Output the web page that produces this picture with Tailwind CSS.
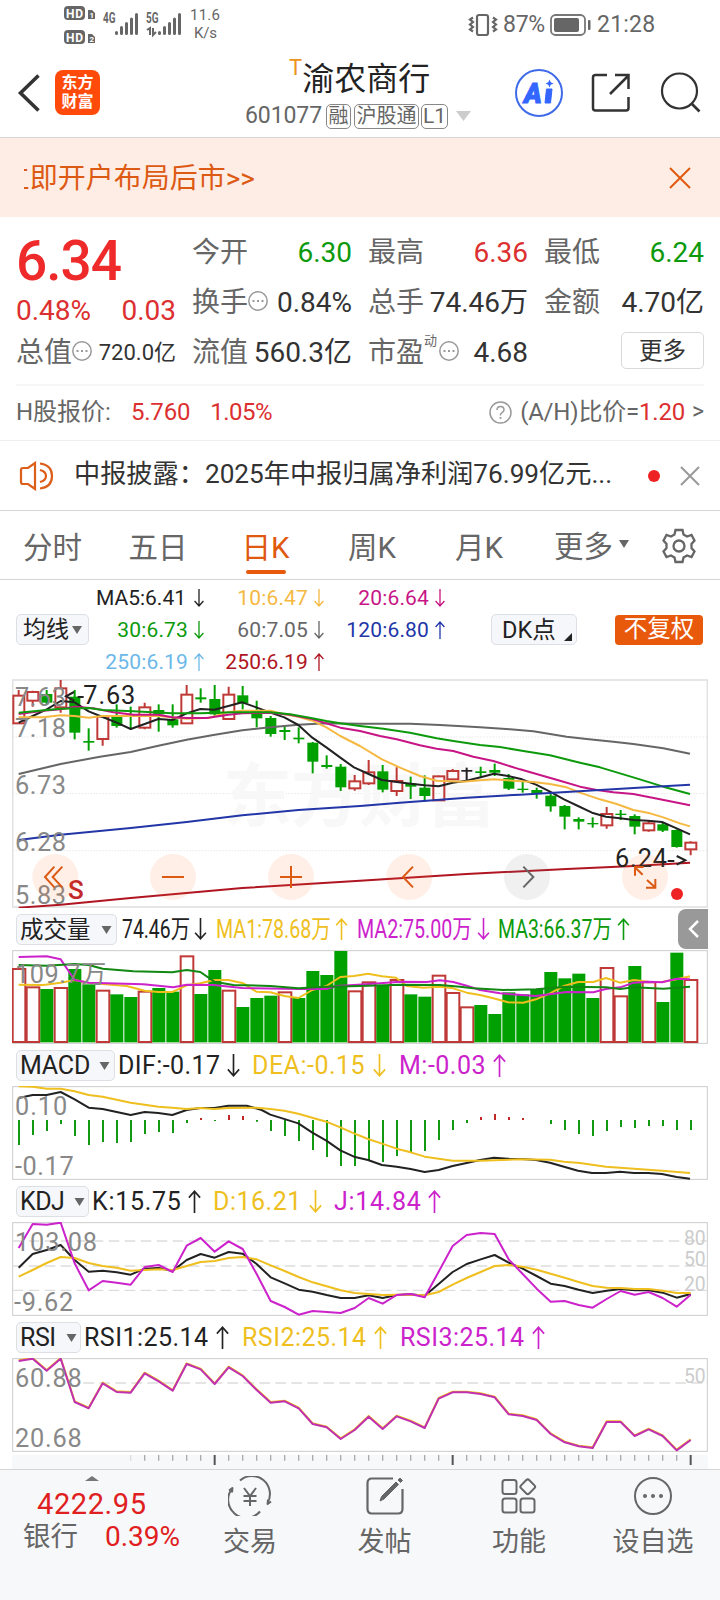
<!DOCTYPE html>
<html lang="zh-CN">
<head>
  <meta charset="UTF-8" />
  <meta name="viewport" content="width=device-width, initial-scale=1.0"/>
  <title>渝农商行 601077</title>
  <script src="https://cdn.jsdelivr.net/npm/@tailwindcss/browser@4"></script>
</head>
<body class="w-[720px] h-[1600px] overflow-hidden bg-white text-[#333] font-['Roboto','Noto_Sans_CJK_SC',sans-serif]">

  <!-- Shared icons -->
  <svg class="hidden">
    <symbol id="up" viewBox="0 0 10 18"><path d="M5 18V1M0.600 6L5 1l4.400 5" fill="none" stroke="currentColor" stroke-width="1.300"/></symbol>
    <symbol id="down" viewBox="0 0 10 18"><path d="M5 0v17M0.600 12L5 17l4.400-5" fill="none" stroke="currentColor" stroke-width="1.300"/></symbol>
    <symbol id="dots" viewBox="0 0 20 20"><circle cx="10" cy="10" r="9.200" fill="none" stroke="#999" stroke-width="1.500"/><path d="M4.500 10h2M9 10h2M13.500 10h2" stroke="#999" stroke-width="2"/></symbol>
    <symbol id="caret" viewBox="0 0 10 8"><path d="M0 0h10L5 8z" fill="#666"/></symbol>
  </svg>

  <!-- Status bar -->
  <div class="h-[50px] flex items-center text-[#666]">
    <svg class="ml-[60px]" width="165" height="50" viewBox="60 0 165 50" font-family="Roboto">
      <g fill="#666">
        <rect x="64" y="6" width="21" height="14" rx="4"/><rect x="64" y="30" width="21" height="14" rx="4"/>
        <path d="M88 10h4l3 3v6h-7zM88 34h4l3 3v6h-7z"/>
      </g>
      <g fill="#fff" font-size="12" font-weight="700">
        <text x="66" y="17.500" textLength="17">HD</text><text x="66" y="41.500" textLength="17">HD</text>
        <text x="89.500" y="18" font-size="8">1</text><text x="89.500" y="42" font-size="8">2</text>
      </g>
      <g fill="#666" font-size="14" font-weight="700">
        <text x="103" y="23" textLength="12.500" lengthAdjust="spacingAndGlyphs">4G</text>
        <text x="146" y="23" textLength="12.500" lengthAdjust="spacingAndGlyphs">5G</text>
      </g>
      <path d="M116.500 33.500v-1M121.500 33.500v-6M126.500 33.500V23.500M131.500 33.500V19M136.500 33.500V14.500M159.500 33.500v-1M164.500 33.500v-6M169.500 33.500V23.500M174.500 33.500V19M179.500 33.500V14.500" stroke="#666" stroke-width="3" stroke-linecap="round"/>
      <path d="M147 30l3-2v7M153 28v7l3-3" stroke="#666" stroke-width="2" fill="none"/>
      <g fill="#666" font-size="15">
        <text x="190" y="20" textLength="30">11.6</text><text x="194" y="38" textLength="23">K/s</text>
      </g>
    </svg>
    <svg class="ml-[243px]" width="30" height="24" viewBox="0 0 30 24" fill="none" stroke="#666" stroke-width="2.200">
      <rect x="9" y="2" width="11" height="20" rx="2"/>
      <path d="M5 4.500L2 6.500l3 2.500-3 2.500 3 2.500-3 2.500 3 2M25 4.500l3 2-3 2.500 3 2.500-3 2.500 3 2.500-3 2"/>
    </svg>
    <span class="ml-[5px] mt-px w-[47px] text-[23px] tracking-[-0.300px]">87%</span>
    <svg width="41" height="22" viewBox="0 0 41 22">
      <rect x="1" y="1" width="34" height="20" rx="4.500" fill="none" stroke="#777" stroke-width="1.800"/>
      <rect x="4" y="4" width="25" height="14" rx="2" fill="#666"/><rect x="38" y="6" width="2.500" height="10" rx="1" fill="#666"/>
    </svg>
    <span class="ml-[6px] mt-px text-[23px] tracking-[0.200px]">21:28</span>
  </div>

  <!-- Header -->
  <div class="h-[88px] flex items-start border-b border-[#d5d5d5]">
    <svg class="ml-[17px] mt-[23px]" width="24" height="40" viewBox="0 0 24 40"><path d="M21.500 2.500L3.500 20l18 17.500" fill="none" stroke="#333" stroke-width="3.600"/></svg>
    <div class="ml-[14px] mt-[20px] w-[45px] h-[45px] rounded-lg bg-[#ff4a0a] text-white font-bold text-[16px] leading-[19px] text-center pt-[3px]">东方<br>财富</div>
    <div class="ml-[145px] mt-[9px] w-[229px]">
      <div class="flex items-start ml-[44px] h-[42px] text-[#222]">
        <span class="text-[22px] leading-[17px] text-[#ee9420]">T</span>
        <span class="text-[32px] leading-[40px] whitespace-nowrap">渝农商行</span>
      </div>
      <div class="flex items-center h-[30px] text-[23px] leading-[24px] text-[#666]">
        <span class="w-[81px] tracking-[-0.100px]">601077</span>
        <span class="w-[25px] h-[25px] border border-[#888] rounded-[5px] text-[20px] leading-[22px] text-center">融</span>
        <span class="ml-[3px] w-[65px] h-[25px] border border-[#888] rounded-[5px] text-[20px] leading-[22px] text-center">沪股通</span>
        <span class="ml-[2px] w-[27px] h-[25px] border border-[#888] rounded-[5px] text-[21px] leading-[23px] text-center">L1</span>
        <svg class="ml-[8px]" width="15" height="10"><path d="M0 0h15L7.500 10z" fill="#ccc"/></svg>
      </div>
    </div>
    <svg class="ml-[41px] mt-[19px]" width="48" height="48" viewBox="0 0 48 48">
      <circle cx="24" cy="24" r="23" fill="none" stroke="#3f6bea" stroke-width="2"/>
      <text x="9" y="33.500" font-size="27" font-weight="900" font-style="italic" font-family="Roboto" fill="#3366ff" stroke="#3366ff" stroke-width="1">A</text>
      <path d="M31.500 20h5.500l-1.500 14H30z" fill="#3366ff" stroke="#3366ff"/>
      <path d="M34.500 10.500l1.200 2.800 2.800 1.200-2.800 1.200-1.200 2.800-1.200-2.800-2.800-1.200 2.800-1.200z" fill="#3366ff"/>
    </svg>
    <svg class="ml-[28px] mt-[23px]" width="40" height="40" viewBox="0 0 40 40" fill="none" stroke="#333" stroke-width="2.500">
      <path d="M16 2H4.500Q2 2 2 4.500V35q0 2.500 2.500 2.500H35q2.500 0 2.500-2.500V24M19 21L37 3M24 2h13.500v14"/>
    </svg>
    <svg class="ml-[29px] mt-[22px]" width="42" height="42" viewBox="0 0 42 42" fill="none" stroke="#333" stroke-width="2.200">
      <circle cx="19.500" cy="19" r="17.500"/><path d="M31.500 31.500l8 8" stroke-width="2.600"/>
    </svg>
  </div>

  <!-- Promo banner -->
  <div class="h-[79px] bg-[#fdede4] flex items-center justify-between">
    <div class="ml-[24px] mt-[3px] w-[231px] overflow-hidden flex justify-end whitespace-nowrap text-[28px] text-[#dd5a14]">立即开户布局后市&gt;&gt;</div>
    <svg class="mr-[29px]" width="22" height="22" viewBox="0 0 22 22"><path d="M1 1l20 20M21 1L1 21" stroke="#e0590f" stroke-width="2"/></svg>
  </div>

  <!-- Quote -->
  <div class="mx-4 h-[169px] pt-[11px] grid grid-cols-4 gap-4 text-[28px] leading-[50px] border-b-2 border-[#f6f6f6] whitespace-nowrap">
    <div>
      <div class="h-[66px] text-[55px] leading-[66px] font-medium text-[#ee2a2a] tracking-[-1px]">6.34</div>
      <div class="h-[34px] leading-[34px] flex justify-between text-[#dc3030] text-[28px]"><span>0.48%</span><span>0.03</span></div>
      <div class="flex items-center justify-between h-[50px]">
        <span class="flex items-center text-[#666]">总值<svg class="-mt-1" width="20" height="20"><use href="#dots"/></svg></span>
        <span class="text-[22px]">720.0亿</span>
      </div>
    </div>
    <div>
      <div class="flex justify-between"><span class="text-[#666]">今开</span><span class="text-[#0c9a0c]">6.30</span></div>
      <div class="flex items-center justify-between"><span class="flex items-center text-[#666]">换手<svg class="-mt-1" width="20" height="20"><use href="#dots"/></svg></span><span>0.84%</span></div>
      <div class="flex justify-between"><span class="text-[#666]">流值</span><span class="text-[28px]">560.3亿</span></div>
    </div>
    <div>
      <div class="flex justify-between"><span class="text-[#666]">最高</span><span class="text-[#dc3030]">6.36</span></div>
      <div class="flex justify-between"><span class="text-[#666]">总手</span><span class="text-[28px]">74.46万</span></div>
      <div class="flex items-center justify-between"><span class="flex items-center text-[#666]">市盈<sup class="text-[13px] leading-none mb-[13px]">动</sup><svg class="-mt-1 ml-[2px]" width="20" height="20"><use href="#dots"/></svg></span><span>4.68</span></div>
    </div>
    <div>
      <div class="flex justify-between"><span class="text-[#666]">最低</span><span class="text-[#0c9a0c]">6.24</span></div>
      <div class="flex justify-between"><span class="text-[#666]">金额</span><span>4.70亿</span></div>
      <div class="flex justify-end"><button class="mt-[4px] w-[83px] h-[37px] border border-[#d9d9d9] rounded-[5px] text-[23.500px] leading-[34px]">更多</button></div>
    </div>
  </div>

  <!-- H share -->
  <div class="h-[55px] border-b border-[#eee] px-4 pb-[2px] flex items-center text-[24px] text-[#666]">
    <span>H股报价:</span>
    <span class="ml-[20px] text-[#dc3030] tracking-[-0.200px]">5.760</span>
    <span class="ml-[20px] text-[#dc3030] tracking-[-0.500px]">1.05%</span>
    <svg class="ml-auto mr-[8px]" width="23" height="23" viewBox="0 0 23 23"><circle cx="11.500" cy="11.500" r="10.500" fill="none" stroke="#999" stroke-width="1.500"/><path d="M8 9q0-3.500 3.500-3.500T15 9q0 1.500-2 2.700t-1.500 2.800" fill="none" stroke="#999" stroke-width="1.500"/><circle cx="11.500" cy="17" r="1.100" fill="#999"/></svg>
    <span class="tracking-[-0.200px]">(A/H)比价=<span class="text-[#dc3030]">1.20</span></span><span class="ml-[7px] text-[23px]">&gt;</span>
  </div>

  <!-- News -->
  <div class="h-[70px] border-b border-[#d5d5d5] flex items-center">
    <svg class="ml-[19px]" width="35" height="30" viewBox="0 0 35 30" fill="none" stroke="#dc5e18" stroke-width="2.200">
      <path d="M2 9q0-2 2-2h5l7-5v26l-7-5H4q-2 0-2-2zM21 2.500Q33 4 33 15T21 27.500M21 9q6 1.500 6 6t-6 6"/>
    </svg>
    <span class="ml-[20px] mb-[2px] w-[574px] text-[26.200px] whitespace-nowrap">中报披露：2025年中报归属净利润76.99亿元...</span>
    <span class="w-3 h-3 rounded-full bg-[#ee2222]"></span>
    <svg class="ml-[20px]" width="20" height="20" viewBox="0 0 20 20"><path d="M1 1l18 18M19 1L1 19" stroke="#999" stroke-width="2"/></svg>
  </div>

  <!-- Tabs -->
  <div class="h-[69px] border-b border-[#d5d5d5] flex text-[29.500px] leading-[74px] text-[#666] text-center">
    <div class="w-[105px]">分时</div>
    <div class="w-[106px]">五日</div>
    <div class="w-[109px] text-[#e0590f] flex flex-col items-center"><span class="h-[59px]">日K</span><span class="w-10 h-1 rounded-full bg-[#e8590c]"></span></div>
    <div class="w-[104px]">周K</div>
    <div class="w-[110px]">月K</div>
    <div class="w-[96px] flex items-center pl-[20px] whitespace-nowrap"><span class="mt-[4px]">更多</span><svg class="ml-[6px] mb-[2px] shrink-0" width="10" height="8"><use href="#caret"/></svg></div>
    <svg class="ml-[32px] mt-[17px]" width="34" height="36" viewBox="0 0 34 36" fill="none" stroke="#666" stroke-width="2.300" stroke-linejoin="miter">
      <path d="M13.500 2h7l1 4.500 3.500 2 4.500-1.500 3 5.500-3 3.500v4l3 3.500-3 5.500-4.500-1.500-3.500 2-1 4.500h-7l-1-4.500-3.500-2L4.500 29l-3-5.500 3-3.500v-4l-3-3.500 3-5.500L9 8.500l3.500-2z"/><circle cx="17" cy="18" r="5.500"/>
    </svg>
  </div>

  <!-- Moving average legend -->
  <div class="h-[99px] flex items-center pl-4">
    <button class="w-[73px] h-[31px] rounded-[5px] border border-[#dcdfe4] bg-[#f6f7fa] text-[23px] leading-[28px] flex items-center justify-center text-[#222] whitespace-nowrap">均线<svg class="ml-[3px] shrink-0" width="10" height="8"><use href="#caret"/></svg></button>
    <div class="grid grid-cols-[115px_120px_121px] auto-rows-[32px] text-[21px] leading-[32px] text-right whitespace-nowrap">
      <div class="flex items-center justify-end gap-[8px] text-[#222]">MA5:6.41<svg width="10" height="18"><use href="#down"/></svg></div>
      <div class="flex items-center justify-end gap-[6px] tracking-[0.150px] text-[#f5b942]">10:6.47<svg width="10" height="18"><use href="#down"/></svg></div>
      <div class="flex items-center justify-end gap-[6px] tracking-[0.150px] text-[#c71585]">20:6.64<svg width="10" height="18"><use href="#down"/></svg></div>
      <div class="flex items-center justify-end gap-[6px] tracking-[0.150px] text-[#0c9a0c]">30:6.73<svg width="10" height="18"><use href="#down"/></svg></div>
      <div class="flex items-center justify-end gap-[6px] tracking-[0.150px] text-[#666]">60:7.05<svg width="10" height="18"><use href="#down"/></svg></div>
      <div class="flex items-center justify-end gap-[6px] tracking-[0.150px] text-[#2236a8]">120:6.80<svg width="10" height="18"><use href="#up"/></svg></div>
      <div class="flex items-center justify-end gap-[6px] tracking-[0.150px] text-[#6cb8e8]">250:6.19<svg width="10" height="18"><use href="#up"/></svg></div>
      <div class="flex items-center justify-end gap-[6px] tracking-[0.150px] text-[#b01522]">250:6.19<svg width="10" height="18"><use href="#up"/></svg></div>
    </div>
    <button class="ml-[46px] w-[86px] h-[31px] rounded-[5px] border border-[#dcdfe4] bg-[#f6f7fa] text-[23.500px] leading-[28px] pl-[10px] flex items-center text-[#222] whitespace-nowrap">DK点<svg class="ml-[8px] mt-[15px] shrink-0" width="8" height="8"><path d="M8 0v8H0z" fill="#222"/></svg></button>
    <span class="ml-[38px] w-[88px] h-[30px] rounded-[4px] bg-[#e8590c] text-white text-[23.500px] leading-[29px] text-center">不复权</span>
  </div>

  <!-- Candles -->
  <svg id="kline" class="block ml-3" width="696" height="229" viewBox="36 27 2088 687" font-family="Roboto, 'Noto Sans CJK SC', sans-serif" fill="none">
    <g stroke="#ddd" stroke-width="3" stroke-dasharray="3 6"><path d="M38 201H2120M38 371H2120M38 542H2120"/></g>
    <text x="668" y="452" font-size="208" font-weight="700" fill="#f8f8f8" textLength="820">东方财富</text>
    <rect x="38" y="30" width="2084" height="681" stroke="#e2e2e2" stroke-width="5"/>
    <g id="candles"></g>
    <g stroke-width="6" stroke-linejoin="round">
      <polyline stroke="#666" points="56,312 182,282 300,260 392,246 475,227 560,209 640,195 727,181 811,172 895,164 979,160 1080,161 1230,161 1320,165 1440,172 1530,178 1600,184 1700,200 1760,207 1840,215 1900,222 1990,235 2070,251"/>
      <polyline stroke="#222" points="56,158 98,138 140,118 182,93 224,97 266,124 308,141 350,158 392,177 434,162 475,147 517,150 560,130 601,117 643,119 685,108 727,97 769,112 811,128 853,142 895,165 937,203 979,232 1021,263 1062,292 1106,312 1146,330 1190,336 1232,341 1274,346 1316,349 1358,338 1400,332 1442,322 1482,311 1524,318 1566,328 1608,344 1650,365 1692,388 1734,408 1776,428 1818,440 1860,445 1902,450 1944,452 1986,456 2030,475 2070,493"/>
      <polyline stroke="#f5b942" points="56,142 130,142 182,136 224,138 266,143 308,138 392,138 475,138 560,146 630,143 685,126 727,122 811,122 850,132 895,140 937,152 979,172 1021,198 1080,228 1146,268 1200,293 1260,318 1310,332 1390,335 1440,331 1482,328 1540,332 1600,336 1650,342 1700,352 1740,368 1800,388 1850,402 1900,420 1950,430 1990,442 2040,460 2070,469"/>
      <polyline stroke="#c71585" points="56,132 130,122 182,118 224,110 280,115 340,127 400,134 475,134 517,142 560,144 620,144 685,134 727,130 811,128 870,134 937,147 979,160 1021,173 1080,183 1140,198 1190,208 1260,226 1310,236 1360,243 1420,260 1480,273 1560,298 1620,315 1680,332 1740,350 1790,360 1840,367 1900,372 1980,388 2070,406"/>
      <polyline stroke="#0c9a0c" points="56,128 140,120 182,116 266,114 308,120 400,124 517,130 600,130 700,127 811,127 870,133 937,145 979,153 1021,160 1080,168 1150,176 1230,188 1310,205 1360,213 1440,225 1500,231 1570,243 1650,256 1740,278 1800,292 1900,322 1990,350 2070,372"/>
      <polyline stroke="#2236a8" points="56,510 182,494 392,474 560,456 727,436 895,420 1080,408 1200,398 1400,383 1560,374 1800,360 1990,349 2070,344"/>
      <polyline stroke="#b01522" points="56,713 182,704 392,684 727,654 1080,632 1400,612 1700,597 1900,588 2070,578"/>
    </g>
    <g fill="#888" font-size="76">
      <text x="45" y="107" textLength="153">7.63</text><text x="45" y="201" textLength="153">7.18</text>
      <text x="45" y="372" textLength="153">6.73</text><text x="45" y="542" textLength="153">6.28</text>
      <text x="45" y="701" textLength="153">5.83</text>
    </g>
    <text x="204" y="688" font-size="78" font-weight="500" fill="#c22828">S</text>
    <path d="M222 66l-24 13 24 13M233 81h18" stroke="#222" stroke-width="6"/>
    <text x="250" y="101" font-size="76" fill="#222" textLength="156">7.63</text>
    <text x="1845" y="592" font-size="76" fill="#222" textLength="156">6.24</text>
    <path d="M2003 573h20M2030 558l26 13-26 13" stroke="#222" stroke-width="6"/>
    <g fill="#fc6a20" fill-opacity="0.110">
      <circle cx="166" cy="621" r="69"/><circle cx="519" cy="621" r="69"/><circle cx="873" cy="621" r="69"/>
      <circle cx="1228" cy="621" r="69"/><circle cx="1581" cy="621" r="69" fill="#777"/><circle cx="1935" cy="621" r="69"/>
    </g>
    <g stroke="#dc5a14" stroke-width="6">
      <path d="M163 590l-28 31 28 31M187 590l-29 31 29 31M486 621h66M840 621h66M873 588v66M1239 590l-30 31 30 31"/>
      <path d="M1570 590l30 31-30 31" stroke="#666"/>
      <path d="M1928 614l-22-21M1905 617v-26h26M1941 630l24 22M1966 627v26h-28"/>
    </g>
    <circle cx="2031" cy="672" r="18" fill="#ee2222"/>
  </svg>

  <!-- Volume -->
  <div class="h-[42px] pl-4 flex items-center">
    <button class="w-[101px] h-[31px] mt-px rounded-[5px] border border-[#dcdfe4] bg-[#f6f7fa] text-[23.500px] leading-[28px] pl-[3px] flex items-center text-[#222] whitespace-nowrap">成交量<svg class="ml-[10px] shrink-0" width="11" height="8"><use href="#caret"/></svg></button>
    <svg width="561" height="36" viewBox="117 0 561 36" font-size="25" font-family="Roboto, 'Noto Sans CJK SC', sans-serif" fill="currentColor">
      <g class="text-[#222]"><text x="122" y="27" textLength="68" lengthAdjust="spacingAndGlyphs">74.46万</text><use href="#down" x="194" y="7" width="13" height="22"/></g>
      <g class="text-[#eebf1e]"><text x="216" y="27" textLength="115" lengthAdjust="spacingAndGlyphs">MA1:78.68万</text><use href="#up" x="335" y="7" width="13" height="22"/></g>
      <g class="text-[#cc22cc]"><text x="357" y="27" textLength="115" lengthAdjust="spacingAndGlyphs">MA2:75.00万</text><use href="#down" x="477" y="7" width="13" height="22"/></g>
      <g class="text-[#0c9a0c]"><text x="498" y="27" textLength="114" lengthAdjust="spacingAndGlyphs">MA3:66.37万</text><use href="#up" x="617" y="7" width="13" height="22"/></g>
    </svg>
    <div class="w-[30px] h-[40px] rounded-l-[8px] bg-[#999] flex items-center justify-center"><svg width="11" height="18"><path d="M10 1L2 9l8 8" fill="none" stroke="#fff" stroke-width="2.500"/></svg></div>
  </div>
  <svg class="block ml-3" width="696" height="94" viewBox="36 30 2088 282" font-family="Roboto, 'Noto Sans CJK SC', sans-serif" fill="none">
    <rect x="38" y="32" width="2084" height="278" stroke="#ccc" stroke-width="3"/>
    <g id="volume"></g>
    <g stroke-width="6" stroke-linejoin="round">
      <polyline stroke="#eebf1e" points="56,134 130,135 182,128 224,120 266,128 308,132 380,138 434,152 475,156 517,156 560,136 601,130 643,120 685,120 730,130 769,155 811,157 853,168 895,174 937,150 979,138 1021,111 1062,108 1104,101 1146,109 1188,113 1220,138 1270,143 1320,140 1360,145 1400,158 1440,165 1480,175 1524,187 1570,188 1608,178 1650,160 1692,138 1734,126 1780,126 1818,114 1860,128 1902,120 1944,125 1986,126 2030,118 2070,109"/>
      <polyline stroke="#cc22cc" points="56,51 140,49 182,58 224,120 266,128 430,133 520,142 560,134 640,135 727,144 900,147 979,147 1010,138 1062,135 1140,130 1200,125 1280,126 1320,121 1360,126 1400,137 1440,150 1500,160 1608,168 1700,156 1780,157 1818,147 1860,142 1902,128 1944,125 1986,127 2030,116 2070,118"/>
      <polyline stroke="#118811" points="56,75 140,77 224,72 266,75 308,86 400,94 517,97 560,90 601,96 643,125 700,135 811,138 895,145 979,140 1080,138 1200,134 1320,135 1380,140 1420,145 1510,150 1608,148 1700,140 1818,142 1860,147 1902,142 1990,146 2070,140"/>
    </g>
    <text x="45" y="128" font-size="76" fill="#888" textLength="274">109.7万</text>
  </svg>

  <!-- MACD -->
  <div class="h-[42px] pl-4 pt-px flex items-center text-[25px] leading-[42px] text-[#222] whitespace-nowrap">
    <button class="w-[99px] h-[31px] rounded-[5px] border border-[#dcdfe4] bg-[#f6f7fa] text-[25px] leading-[29px] pl-[3px] tracking-[-0.200px] flex items-center">MACD<svg class="ml-[9px] shrink-0" width="11" height="8"><use href="#caret"/></svg></button>
    <span class="ml-[3px] w-[109px] tracking-[0.400px]">DIF:-0.17</span><svg width="13" height="23"><use href="#down"/></svg>
    <span class="ml-[12px] w-[121px] tracking-[0.500px] text-[#eebf1e]">DEA:-0.15</span><svg class="text-[#eebf1e]" width="13" height="23"><use href="#down"/></svg>
    <span class="ml-[13px] w-[94px] tracking-[0.500px] text-[#cc22cc]">M:-0.03</span><svg class="text-[#cc22cc]" width="13" height="23"><use href="#up"/></svg>
  </div>
  <svg class="block ml-3" width="696" height="94" viewBox="36 438 2088 282" font-family="Roboto" fill="none">
    <rect x="38" y="440" width="2084" height="278" stroke="#ccc" stroke-width="3"/>
    <g id="macd"></g>
    <g stroke-width="6" stroke-linejoin="round">
      <polyline stroke="#222" points="56,474 98,465 140,465 182,456 224,478 266,503 308,507 350,516 392,525 434,516 475,519 517,525 560,510 601,504 643,504 685,497 740,497 785,510 811,524 895,550 937,578 979,602 1021,631 1062,650 1104,660 1146,675 1190,680 1232,687 1274,696 1316,690 1358,678 1400,669 1440,660 1482,653 1524,656 1566,657 1608,660 1650,668 1692,680 1734,692 1776,699 1818,699 1860,695 1902,699 1944,699 1986,702 2030,711 2070,716"/>
      <polyline stroke="#eebf1e" points="56,439 98,440 140,446 182,446 224,454 266,465 308,470 350,479 392,488 434,494 475,500 517,503 560,507 601,504 643,507 685,504 769,503 811,507 853,512 895,521 937,533 979,545 1021,562 1062,580 1104,597 1146,611 1190,626 1232,637 1274,650 1316,656 1358,662 1440,662 1560,658 1650,659 1692,665 1740,669 1818,680 1902,686 1986,692 2070,699"/>
    </g>
    <g fill="#888" font-size="76"><text x="45" y="524" textLength="157">0.10</text><text x="45" y="704" textLength="176">-0.17</text></g>
  </svg>

  <!-- KDJ -->
  <div class="h-[42px] pl-4 pt-px flex items-center text-[25px] leading-[42px] text-[#222] whitespace-nowrap">
    <button class="w-[73px] h-[31px] rounded-[5px] border border-[#dcdfe4] bg-[#f6f7fa] text-[25px] leading-[29px] pl-[3px] tracking-[-0.500px] flex items-center">KDJ<svg class="ml-[10px] shrink-0" width="11" height="8"><use href="#caret"/></svg></button>
    <span class="ml-[3px] w-[96px] tracking-[0.700px]">K:15.75</span><svg width="13" height="23"><use href="#up"/></svg>
    <span class="ml-[12px] w-[96px] tracking-[0.500px] text-[#eebf1e]">D:16.21</span><svg class="text-[#eebf1e]" width="13" height="23"><use href="#down"/></svg>
    <span class="ml-[12px] w-[94px] tracking-[0.700px] text-[#cc22cc]">J:14.84</span><svg class="text-[#cc22cc]" width="13" height="23"><use href="#up"/></svg>
  </div>
  <svg class="block ml-3" width="696" height="94" viewBox="36 66 2088 282" font-family="Roboto" fill="none">
    <rect x="38" y="68" width="2084" height="278" stroke="#ccc" stroke-width="3"/>
    <path d="M38 123H2120M38 198H2120M38 271H2120" stroke="#ddd" stroke-width="4" stroke-dasharray="32 16"/>
    <g fill="#ccc" font-size="58"><text x="2052" y="135">80</text><text x="2052" y="198">50</text><text x="2052" y="272">20</text></g>
    <g id="kdj" stroke-width="6" stroke-linejoin="round"></g>
    <g fill="#888" font-size="76"><text x="45" y="153" textLength="246">103.08</text><text x="42" y="332" textLength="178">-9.62</text></g>
  </svg>

  <!-- RSI -->
  <div class="h-[42px] pl-4 pt-px flex items-center text-[25px] leading-[42px] text-[#222] whitespace-nowrap">
    <button class="w-[65px] h-[31px] rounded-[5px] border border-[#dcdfe4] bg-[#f6f7fa] text-[25px] leading-[29px] pl-[3px] tracking-[-0.500px] flex items-center">RSI<svg class="ml-[10px] shrink-0" width="11" height="8"><use href="#caret"/></svg></button>
    <span class="ml-[3px] w-[132px] tracking-[0.450px]">RSI1:25.14</span><svg width="13" height="23"><use href="#up"/></svg>
    <span class="ml-[13px] w-[132px] tracking-[0.450px] text-[#eebf1e]">RSI2:25.14</span><svg class="text-[#eebf1e]" width="13" height="23"><use href="#up"/></svg>
    <span class="ml-[13px] w-[132px] tracking-[0.450px] text-[#cc22cc]">RSI3:25.14</span><svg class="text-[#cc22cc]" width="13" height="23"><use href="#up"/></svg>
  </div>
  <svg class="block ml-3" width="696" height="94" viewBox="36 474 2088 282" font-family="Roboto" fill="none">
    <rect x="38" y="476" width="2084" height="278" stroke="#ccc" stroke-width="3"/>
    <path d="M250 549H2120" stroke="#ddd" stroke-width="4" stroke-dasharray="32 16"/>
    <text x="2052" y="549" fill="#ccc" font-size="58">50</text>
    <g id="rsi" stroke-width="6" stroke-linejoin="round"></g>
    <g fill="#888" font-size="76"><text x="45" y="560" textLength="200">60.88</text><text x="45" y="740" textLength="200">20.68</text></g>
  </svg>

  <!-- Date ruler -->
  <svg class="block ml-3 mt-[3px] bg-[#f7f8fa]" width="696" height="14" viewBox="36 0 2088 42"><g id="ruler"></g></svg>

  <!-- Bottom bar -->
  <div class="h-[131px] border-t border-[#d5d5d5] bg-[#f7f8fa] flex text-[27px] leading-[40px] text-[#666]">
    <div class="w-[183px] pl-[23px] whitespace-nowrap">
      <svg class="ml-[62px] mt-[6px]" width="14" height="5"><path d="M0 5L7 0l7 5z" fill="#777"/></svg>
      <div class="ml-[14px] mt-[2px] h-[35px] leading-[42px] text-[29px] tracking-[0.600px] text-[#e02020]">4222.95</div>
      <div class="h-[40px] leading-[38px] flex text-[27.500px]"><span class="w-[82px]">银行</span><span class="text-[#e02020] text-[28px]">0.39%</span></div>
    </div>
    <div class="w-[134px] flex flex-col items-center">
      <svg class="mt-[6px]" width="44" height="40" viewBox="0 0 44 40" fill="none" stroke="#666" stroke-width="2">
        <path d="M12 4.500A18 18 0 0 1 39.500 27M39.500 28.500l.5-5M39 28.500l4-3M32 35.500A18 18 0 0 1 4.500 12M4.500 11.500l-.500 5M5 11.500l-4 3"/>
        <path d="M16 12l6 8 6-8M15.500 20h13M15.500 25h13M22 20v10"/>
      </svg>
      <span class="mt-[6px]">交易</span>
    </div>
    <div class="w-[135px] flex flex-col items-center">
      <svg class="mt-[6px]" width="40" height="40" viewBox="0 0 40 40" fill="none" stroke="#666" stroke-width="2.200">
        <path d="M28 2.500H7Q2.500 2.500 2.500 7v26q0 4.500 4.500 4.500h26q4.500 0 4.500-4.500V13"/>
        <path d="M15 25l1.500-4.500L31 6l2.500 2.500L19 23zM33 4l2-2 2.500 2.500-2 2z" fill="#666" stroke-width="1"/>
      </svg>
      <span class="mt-[6px]">发帖</span>
    </div>
    <div class="w-[134px] flex flex-col items-center">
      <svg class="mt-[6px]" width="40" height="40" viewBox="0 0 40 40" fill="none" stroke="#666" stroke-width="2">
        <rect x="3.500" y="4" width="14" height="14" rx="2.500"/><rect x="3.500" y="22.500" width="14" height="14" rx="2.500"/><rect x="21.500" y="22.500" width="14" height="14" rx="2.500"/>
        <rect x="23" y="5" width="11.500" height="11.500" rx="2" transform="rotate(45 28.750 10.750)"/>
      </svg>
      <span class="mt-[6px]">功能</span>
    </div>
    <div class="w-[134px] flex flex-col items-center">
      <svg class="mt-[6px]" width="40" height="40" viewBox="0 0 40 40" fill="none" stroke="#666" stroke-width="2">
        <circle cx="20" cy="20" r="18"/><g fill="#666" stroke="none"><circle cx="12" cy="20" r="2"/><circle cx="20" cy="20" r="2"/><circle cx="28" cy="20" r="2"/></g>
      </svg>
      <span class="mt-[6px]">设自选</span>
    </div>
  </div>

  <script>
    const RED = "#bf3a36", GREEN = "#00a000";
    const px = i => 56 + 42 * i;
    const fill = (id, html) => document.getElementById(id).innerHTML = html;

    // [up/down/flat, high, body top, body bottom, low]
    const candles = [
      ["r",60,77,160,160],["r",62,66,92,110],["g",60,72,98,105],["r",30,55,112,128],["g",60,80,188,208],
      ["g",175,213,218,242],["r",138,140,207,227],["g",103,136,168,173],["g",110,136,141,180],["r",98,112,173,178],
      ["g",103,120,133,185],["g",103,148,166,173],["r",45,74,160,162],["g",55,82,88,98],["g",45,87,133,138],
      ["r",50,74,147,150],["g",48,76,100,118],["g",92,120,145,172],["g",138,144,192,200],["g",170,180,186,210],
      ["g",172,203,208,220],["g",216,218,275,310],["g",256,285,291,296],["g",282,290,352,363],["r",315,334,355,362],
      ["r",270,307,340,345],["g",285,304,359,367],["r",292,333,363,378],["g",320,340,350,387],["g",316,353,378,395],
      ["r",317,319,391,391],["r",297,303,328,330],["k",293,300,305,330],["g",290,304,309,322],["g",281,300,308,318],
      ["g",312,324,356,360],["g",336,356,360,368],["g",353,360,372,386],["g",372,377,409,425],["g",405,408,440,478],
      ["g",442,447,455,478],["g",442,459,463,473],["r",411,432,466,476],["g",420,431,435,450],["g",433,438,470,493],
      ["r",452,460,481,485],["g",457,463,482,486],["g",478,480,531,533],["r",514,518,538,556]
    ];
    fill("candles", candles.map(([t, hi, top, bot, lo], i) => {
      const x = px(i);
      if (t === "r") return `<path d="M${x} ${hi}V${top}M${x} ${bot}V${lo}" stroke="${RED}" stroke-width="6"/>
        <rect x="${x - 16}" y="${top}" width="33" height="${bot - top}" stroke="${RED}" stroke-width="6"/>`;
      const c = t === "k" ? "#222" : GREEN;
      return `<path d="M${x} ${hi}V${lo}" stroke="${c}" stroke-width="6"/><rect x="${x - 16}" y="${top}" width="33" height="${bot - top}" fill="${c}"/>`;
    }).join(""));

    const vol = [85,140,147,142,87,133,150,163,171,153,144,155,47,162,90,150,201,174,167,155,174,93,105,33,152,
      125,135,118,163,170,105,157,200,195,222,157,163,147,96,115,101,174,82,167,78,125,186,38,118];
    const volUp = [0,1,3,6,9,12,15,19,24,25,27,30,31,32,42,43,45,48];
    fill("volume", vol.map((y, i) => {
      if (!volUp.includes(i)) return `<rect x="${px(i) - 19}" y="${y}" width="39" height="${307 - y}" fill="${GREEN}"/>`;
      const left = Math.max(px(i) - 18, 36);
      return `<rect x="${left}" y="${y + 2}" width="${px(i) + 20 - left}" height="${304 - y}" stroke="${RED}" stroke-width="6"/>`;
    }).join(""));

    const macd = [615,585,573,552,588,615,606,609,606,582,576,579,549,534,543,525,528,545,573,588,603,630,651,678,678,
      660,666,648,636,633,600,570,549,531,522,531,534,540,552,570,582,588,573,561,564,558,558,570,570];
    fill("macd", macd.map((y, i) => `<path d="M${px(i) + 1} 540V${y}" stroke="${y < 540 ? "#c22828" : "#119911"}" stroke-width="6"/>`).join(""));

    const line = (ys, color, dy = 0) => `<polyline stroke="${color}" points="${ys.map((y, i) => px(i) + "," + (y + dy)).join(" ")}"/>`;
    fill("kdj",
      line([203,162,150,135,180,215,212,217,224,206,204,213,180,162,173,156,161,192,232,250,269,275,285,294,294,286,294,285,283,287,252,216,192,178,165,188,206,228,251,258,269,279,272,267,271,271,278,293,282], "#222") +
      line([230,210,189,171,174,189,198,203,212,210,208,210,198,186,183,174,171,178,196,213,231,247,259,271,279,282,285,284,284,286,276,254,234,216,198,195,200,209,221,233,246,258,263,264,267,267,272,279,279], "#eebf1e") +
      line([144,72,74,68,190,271,243,248,254,201,195,216,137,114,155,124,147,222,303,321,344,333,336,339,324,294,311,285,282,292,215,138,105,99,102,178,222,266,305,303,315,323,297,273,284,276,294,320,284], "#cc22cc"));

    const rsi = [483,476,512,476,606,625,550,576,578,520,544,572,492,508,552,502,528,570,608,604,625,672,682,717,690,650,687,649,664,684,596,577,577,582,592,643,648,660,702,727,739,744,666,666,708,688,708,751,720];
    fill("rsi", line(rsi, "#eebf1e", -2) + line(rsi, "#c030b0"));

    let ticks = "";
    for (let i = 8; i < 49; i++) {
      const major = [14, 31, 48].includes(i);
      ticks += `<path d="M${px(i)} 0V${major ? 30 : 17}" stroke="${major ? "#555" : i === 8 ? "#ddd" : "#aaa"}" stroke-width="${major ? 6 : 4}"/>`;
    }
    fill("ruler", ticks);
  </script>
</body>
</html>
